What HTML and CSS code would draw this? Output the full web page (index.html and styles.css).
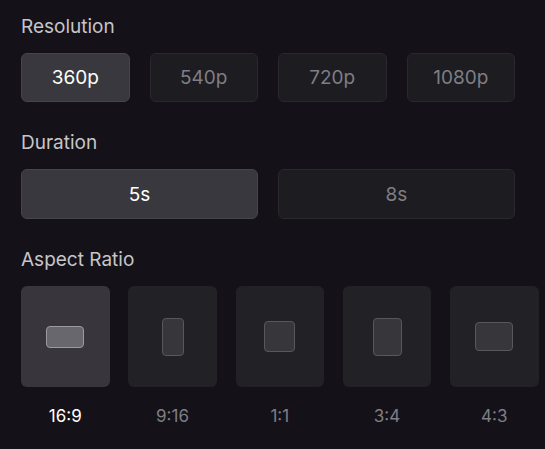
FILE: index.html
```html
<!DOCTYPE html>
<html lang="en">
<head>
  <meta charset="UTF-8" />
  <meta name="viewport" content="width=device-width, initial-scale=1.0"/>
  <title>Video Settings</title>
  <link rel="stylesheet" href="styles.css">
</head>
<body>
  <div class="panel">
    <div class="section">
      <div class="section-title">Resolution</div>
      <div class="option-grid four">
        <button class="option short active">360p</button>
        <button class="option short">540p</button>
        <button class="option short">720p</button>
        <button class="option short">1080p</button>
      </div>
    </div>

    <div class="section">
      <div class="section-title">Duration</div>
      <div class="option-grid two">
        <button class="option active">5s</button>
        <button class="option">8s</button>
      </div>
    </div>

    <div class="section">
      <div class="section-title">Aspect Ratio</div>
      <div class="ratio-row">
        <div class="ratio active">
          <div class="ratio-card"><span class="shape" style="width: 38px; height: 22px"></span></div>
          <div class="ratio-label">16:9</div>
        </div>
        <div class="ratio">
          <div class="ratio-card"><span class="shape" style="width: 22px; height: 38px"></span></div>
          <div class="ratio-label">9:16</div>
        </div>
        <div class="ratio">
          <div class="ratio-card"><span class="shape" style="width: 31px; height: 31px"></span></div>
          <div class="ratio-label">1:1</div>
        </div>
        <div class="ratio">
          <div class="ratio-card"><span class="shape" style="width: 29px; height: 38px"></span></div>
          <div class="ratio-label">3:4</div>
        </div>
        <div class="ratio">
          <div class="ratio-card"><span class="shape" style="width: 38px; height: 29px"></span></div>
          <div class="ratio-label">4:3</div>
        </div>
      </div>
    </div>
  </div>
</body>
</html>
```

FILE: styles.css
```css
body {
  margin: 0;
  background: #141218;
  font-family: Inter, "Noto Sans", sans-serif;
  color: #c9c8cd;
  overflow: hidden;
}
.panel {
  width: 494px;
  padding: 14px 21px 0;
}
.section {
  margin-bottom: 28px;
}
.section-title {
  font-size: 19px;
  line-height: 26px;
  color: #c6c5ca;
  margin-bottom: 13px;
}
.option-grid {
  display: grid;
  gap: 20px;
}
.option-grid.four {
  grid-template-columns: repeat(4, 1fr);
}
.option-grid.two {
  grid-template-columns: repeat(2, 1fr);
}
.option {
  height: 50px;
  border-radius: 6px;
  border: 1px solid #29282d;
  background: #1d1c21;
  color: #7f7e85;
  font-family: inherit;
  font-size: 19px;
  padding: 0;
  cursor: pointer;
}
.option.short {
  height: 49px;
}
.option.active {
  background: #39383e;
  border-color: #46454b;
  color: #ffffff;
}
.ratio-row {
  display: flex;
  gap: 18.75px;
}
.ratio {
  width: 88.5px;
  flex-shrink: 0;
}
.ratio-card {
  height: 101px;
  border-radius: 6px;
  background: #222126;
  display: flex;
  align-items: center;
  justify-content: center;
}
.shape {
  box-sizing: border-box;
  border: 1.5px solid #58575d;
  border-radius: 4px;
  background: #37363b;
}
.ratio.active .ratio-card {
  background: #38363c;
}
.ratio.active .shape {
  border-color: #9b9aa0;
  background: #68676d;
}
.ratio-label {
  margin-top: 19px;
  text-align: center;
  font-size: 17px;
  color: #7f7e85;
}
.ratio.active .ratio-label {
  color: #ffffff;
}
```
